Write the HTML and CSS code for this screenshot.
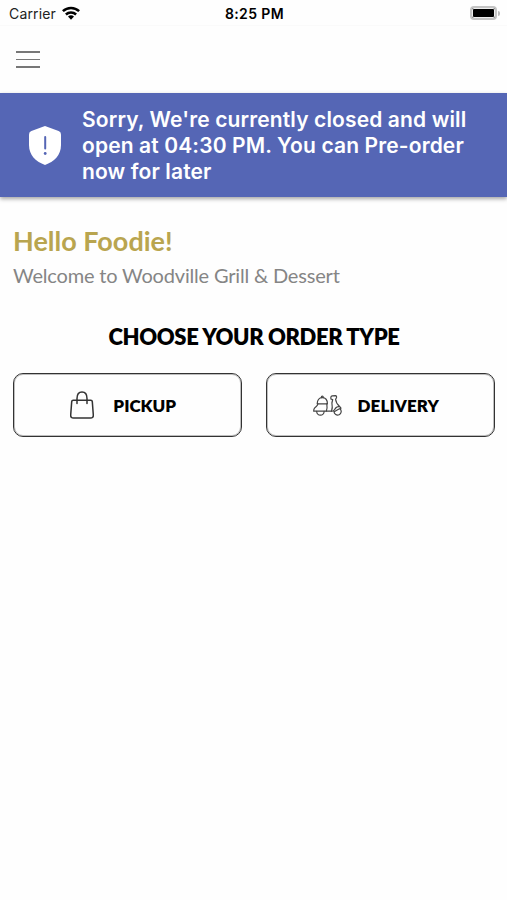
FILE: index.html
```html
<!DOCTYPE html>
<html lang="en">

<head>
  <title>Woodville Grill &amp; Dessert</title>
  <meta charset="utf-8">
  <meta name="viewport" content="width=device-width, initial-scale=1">
  <link rel="stylesheet" href="styles.css">
</head>

<body>
  <!-- Status bar -->
  <div class="status-bar">
    <div class="carrier">
      <span class="carrier-name">Carrier</span>
      <svg class="wifi" viewBox="0 0 18 14" width="18" height="14">
        <g fill="none" stroke="#000" stroke-width="2.5">
          <path d="M0.9 5.2a11.6 11.6 0 0 1 16.2 0"></path>
          <path d="M3.9 8.5a7.4 7.4 0 0 1 10.2 0"></path>
        </g>
        <path d="M9 13.7l-3-3.1a4.3 4.3 0 0 1 6 0z"></path>
      </svg>
    </div>
    <div class="clock">8:25 PM</div>
    <div class="battery">
      <div class="battery-body"></div>
      <div class="battery-tip"></div>
    </div>
  </div>

  <header class="header">
    <button class="menu-btn" aria-label="Menu">
      <span></span>
      <span></span>
      <span></span>
    </button>
  </header>

  <!-- Closed notice -->
  <div class="notice">
    <svg class="shield" viewBox="0 0 32 39" width="32" height="39">
      <path fill="#fff" d="M16 0l13.6 4.9Q32 5.8 32 8.4V19c0 10.5-7 16.6-16 20C7 35.6 0 29.5 0 19V8.4Q0 5.8 2.4 4.9z"></path>
      <path stroke="#5566b5" stroke-width="2" stroke-linecap="round" d="M16.2 11v11.5"></path>
      <circle cx="16.2" cy="27.5" r="1.4" fill="#5566b5"></circle>
    </svg>
    <p class="notice-text">Sorry, We're currently closed and will<br>open at 04:30 PM. You can Pre-order<br>now for later</p>
  </div>

  <main class="content">
    <h1>Hello Foodie!</h1>
    <p class="welcome">Welcome to Woodville Grill &amp; Dessert</p>

    <h2>CHOOSE YOUR ORDER TYPE</h2>
    <div class="order-types">
      <button class="order-btn">
        <svg class="bag" viewBox="0 0 24 28" width="24" height="28">
          <g fill="none" stroke="#333" stroke-width="1.5" stroke-linecap="round" stroke-linejoin="round">
            <path d="M3.2 9.2h17.6q1.4 0 1.5 1.4l1 13.4q.2 3-2.8 3h-17q-3 0-2.8-3l1-13.4q.1-1.4 1.5-1.4z"></path>
            <path d="M7 12.5V7.5C7 3.5 9 .9 12 .9s5 2.6 5 6.6v5"></path>
          </g>
        </svg>
        <span>PICKUP</span>
      </button>
      <button class="order-btn delivery">
        <svg class="scooter" viewBox="0 0 29 21" width="29" height="21">
          <g fill="none" stroke="#444" stroke-width="1.2" stroke-linecap="round" stroke-linejoin="round">
            <path d="M4.2 8.8C4.2 5 6.2 2.6 9.3 2.6s5.1 2.4 5.1 6.2z"></path>
            <path d="M8.3 2.6q0-1.5 1-1.5t1 1.5"></path>
            <path d="M4.9 8.8C4.7 11.500 2.500 11.500 1.300 13.500Q.7 14.600.7 16.200h12.600c1.300-2.400.9-4.600.5-7.400"></path>
            <path d="M3.7 16.4a3.7 3.7 0 0 0 7.4 0"></path>
            <path d="M13.3 16.2h5.2c1.300-3 .9-5.500.4-8.200l.8-3.500-1.700-.3q-.7-3 1.200-3.400l3.300-.1q1.300.2 1 2l-.9 1.600c.3 3 1.600 5.200 3.800 7"></path>
            <path d="M18.5 16.2c2.500.6 3-1.800 4.200-3.200 1.300-1.500 4.500-2.400 5.300.2l-2.500 1-4.300 2.600"></path>
            <path d="M21 16.600a3.600 3.600 0 1 0 6-2.800"></path>
          </g>
        </svg>
        <span>DELIVERY</span>
      </button>
    </div>
  </main>
</body>

</html>
```
FILE: styles.css
```css
:root {
  --notice-color: #5566b5;
  --gold: #b9a54f;
  --grey: #858585;
}

* {
  box-sizing: border-box;
}

body {
  margin: 0;
  min-height: 900px;
  background-color: #fefefe;
  color: #000;
  font-family: Lato, "Open Sans", sans-serif;
}

h1,
h2,
p {
  margin: 0;
}

button {
  background: none;
  border: none;
  padding: 0;
  font-family: inherit;
  color: inherit;
}

svg {
  display: block;
  flex-shrink: 0;
}

/* --- Status bar --- */
.status-bar {
  display: grid;
  grid-template-columns: 1fr auto 1fr;
  align-items: center;
  height: 26px;
  padding: 1px 7px 0 9px;
  border-bottom: 1px solid #fafafa;
  font-family: Inter, sans-serif;
  font-size: 14px;
}

.carrier {
  display: flex;
  align-items: center;
  gap: 6px;
}

.carrier-name {
  color: #222;
  letter-spacing: 0.15px;
}

.clock {
  font-weight: 600;
  letter-spacing: 0.4px;
}

.battery {
  display: flex;
  align-items: center;
  justify-content: flex-end;
  gap: 1px;
}

.battery-body {
  width: 27px;
  height: 14px;
  border: 2px solid #c4c4c4;
  border-radius: 4px;
  background-color: #000;
  box-shadow: inset 0 0 0 1px #eee;
}

.battery-tip {
  width: 2px;
  height: 5px;
  border-radius: 0 2px 2px 0;
  background-color: #bbb;
}

/* --- Header --- */
.header {
  display: flex;
  align-items: center;
  height: 67px;
  padding: 0 16px;
}

.menu-btn {
  display: flex;
  flex-direction: column;
  gap: 6px;
  width: 24px;
}

.menu-btn span {
  height: 1.5px;
  background-color: #777;
}

/* --- Closed notice --- */
.notice {
  display: flex;
  align-items: center;
  gap: 21px;
  height: 104px;
  padding: 0 29px;
  background-color: var(--notice-color);
  box-shadow: 0 2px 4px rgba(0, 0, 0, 0.35);
}

.notice-text {
  padding-top: 2px;
  color: #fff;
  font-family: Inter, sans-serif;
  font-size: 21px;
  font-weight: 600;
  letter-spacing: 0.13px;
  line-height: 26px;
  white-space: nowrap;
}

/* --- Content --- */
.content {
  padding: 27px 12px 0 13px;
}

h1 {
  color: var(--gold);
  font-size: 27px;
  font-weight: 700;
  line-height: 34px;
}

.welcome {
  color: var(--grey);
  font-size: 20px;
  letter-spacing: -0.18px;
  line-height: 34px;
}

h2 {
  margin-top: 28px;
  font-size: 22px;
  font-weight: 800;
  letter-spacing: -0.38px;
  line-height: 34px;
  text-align: center;
}

.order-types {
  display: flex;
  gap: 24px;
  margin-top: 19px;
}

.order-btn {
  display: flex;
  flex: 1;
  align-items: center;
  justify-content: center;
  gap: 19px;
  height: 64px;
  padding-right: 8px;
  border: 1px solid #333;
  border-radius: 10px;
  box-shadow: inset 0 0 0 1px rgba(0, 0, 0, 0.25);
  font-size: 17px;
  font-weight: 800;
}

.order-btn.delivery {
  gap: 16px;
  padding-right: 9px;
  letter-spacing: 0.1px;
}
```
